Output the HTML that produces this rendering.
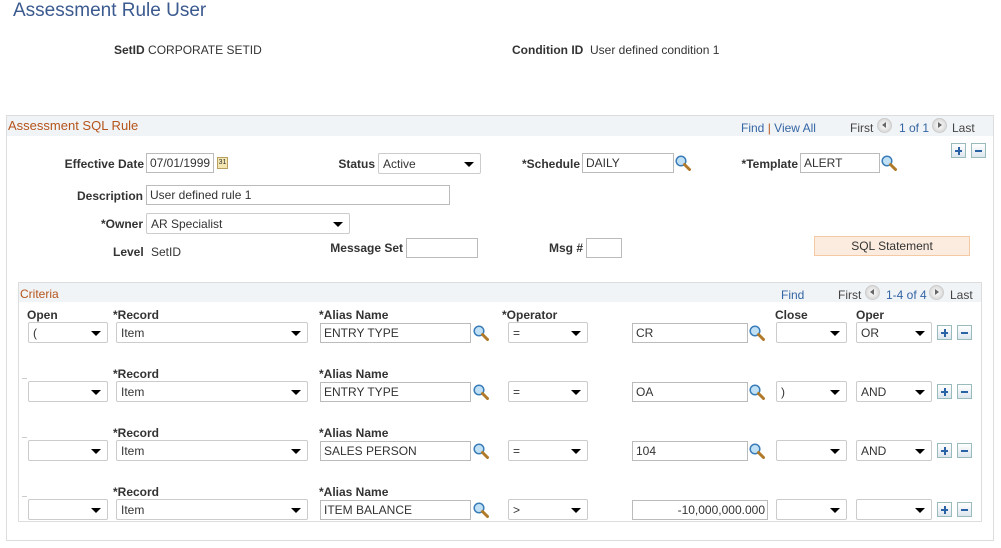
<!DOCTYPE html>
<html><head><meta charset="utf-8"><style>
*{box-sizing:border-box}
body{margin:0;width:1001px;height:548px;background:#fff;font-family:"Liberation Sans",Arial,sans-serif;font-size:12px;color:#333;position:relative;overflow:hidden}
.a{position:absolute;white-space:nowrap;line-height:14px}
.b{font-weight:bold}
.r{text-align:right}
.in{position:absolute;border:1px solid #bbb;background:#fff;height:20px;line-height:18px;padding-left:3px;white-space:nowrap}
.sel{position:absolute;border:1px solid #ccc;border-radius:2px;background:#fff;height:21px;line-height:20px;padding-left:4px;white-space:nowrap}
.sel:after{content:"";position:absolute;right:6px;top:8px;border-left:5px solid transparent;border-right:5px solid transparent;border-top:5px solid #000}
.lens{position:absolute;width:16px;height:16px}
.pm{position:absolute;width:15px;height:15px;border:1px solid #9bb;background:linear-gradient(#fff,#dde6ee);}
.pm:before{content:"";position:absolute;left:3px;top:6px;width:7px;height:2px;background:#2a62a6}
.pm.p:after{content:"";position:absolute;left:6px;top:3px;width:2px;height:8px;background:#2a62a6}
.arr{position:absolute;width:15px;height:15px;border-radius:50%;background:radial-gradient(#fff,#ccc);border:1px solid #ccc}
.arr:after{content:"";position:absolute;top:3px;border-top:3px solid transparent;border-bottom:3px solid transparent}
.arr.l:after{left:4px;border-right:4px solid #666}
.arr.rt:after{left:5px;border-left:4px solid #666}
.lnk{color:#3465a4}
.hd{position:absolute;background:#f1f4f6}
.or{color:#b5541c}
</style></head><body>
<svg width="0" height="0" style="position:absolute"><defs><symbol id="lz" viewBox="0 0 16 16"><circle cx="6" cy="6" r="4.8" fill="#bfe0f5" stroke="#3a7cb8" stroke-width="1.5"/><path d="M9.5 9.5L14.5 14.5" stroke="#b07a2a" stroke-width="3" stroke-linecap="round"/></symbol></defs></svg>

<div class="a" style="left:13px;top:0px;font-size:19px;line-height:22px;color:#3b5a8f">Assessment Rule User</div>
<div class="a" style="left:114px;top:43px"><span class="b">SetID</span> CORPORATE SETID</div>
<div class="a" style="left:512px;top:43px"><span class="b">Condition ID</span>&nbsp; User defined condition 1</div>

<div style="position:absolute;left:6px;top:115px;width:988px;height:426px;border:1px solid #ddd"></div>
<div class="hd" style="left:7px;top:116px;width:986px;height:20px"></div>
<div class="a or" style="left:8px;top:119px;font-size:13px">Assessment SQL Rule</div>
<div class="a" style="left:741px;top:121px"><span class="lnk">Find</span> <span style="color:#b5541c">|</span> <span class="lnk">View All</span></div>
<div class="a" style="left:850px;top:121px;color:#444">First</div>
<div class="arr l" style="left:877px;top:118px"></div>
<div class="a" style="left:899px;top:121px;color:#3465a4">1 of 1</div>
<div class="arr rt" style="left:932px;top:118px"></div>
<div class="a" style="left:952px;top:121px;color:#444">Last</div>
<div class="pm p" style="left:951px;top:143px"></div><div class="pm" style="left:971px;top:143px"></div>

<div class="a b r" style="right:857px;top:157px">Effective Date</div>
<div class="in" style="left:146px;top:153px;width:68px">07/01/1999</div>
<div style="position:absolute;left:217px;top:157px;width:11px;height:12px;background:#f3e6b0;border:1px solid #b9a060;font-size:7px;line-height:10px;text-align:center">31</div>
<div class="a b r" style="right:626px;top:157px">Status</div>
<div class="sel" style="left:378px;top:153px;width:103px">Active</div>
<div class="a b r" style="right:421px;top:157px">*Schedule</div>
<div class="in" style="left:582px;top:153px;width:92px">DAILY</div>
<svg class="lens" style="left:675px;top:155px"><use href="#lz"/></svg>
<div class="a b r" style="right:203px;top:157px">*Template</div>
<div class="in" style="left:800px;top:153px;width:80px">ALERT</div>
<svg class="lens" style="left:881px;top:155px"><use href="#lz"/></svg>

<div class="a b r" style="right:858px;top:189px">Description</div>
<div class="in" style="left:146px;top:185px;width:304px">User defined rule 1</div>
<div class="a b r" style="right:858px;top:217px">*Owner</div>
<div class="sel" style="left:146px;top:213px;width:204px">AR Specialist</div>
<div class="a b" style="left:113px;top:245px">Level</div>
<div class="a" style="left:151px;top:245px">SetID</div>
<div class="a b r" style="right:598px;top:241px">Message Set</div>
<div class="in" style="left:406px;top:238px;width:72px"></div>
<div class="a b r" style="right:418px;top:241px">Msg #</div>
<div class="in" style="left:586px;top:238px;width:36px"></div>
<div style="position:absolute;left:814px;top:236px;width:156px;height:20px;background:#fcecdf;border:1px solid #f4c9a4;text-align:center;line-height:18px">SQL Statement</div>

<div style="position:absolute;left:18px;top:282px;width:964px;height:240px;border:1px solid #ddd"></div>
<div class="hd" style="left:19px;top:283px;width:962px;height:19px"></div>
<div class="a or" style="left:20px;top:287px">Criteria</div>
<div class="a lnk" style="left:781px;top:288px">Find</div>
<div class="a" style="left:838px;top:288px;color:#444">First</div>
<div class="arr l" style="left:865px;top:285px"></div>
<div class="a" style="left:886px;top:288px;color:#3465a4">1-4 of 4</div>
<div class="arr rt" style="left:929px;top:285px"></div>
<div class="a" style="left:950px;top:288px;color:#444">Last</div>

<!-- row 1 -->
<div class="a b" style="left:27px;top:308px">Open</div>
<div class="a b" style="left:113px;top:308px">*Record</div>
<div class="a b" style="left:319px;top:308px">*Alias Name</div>
<div class="a b" style="left:502px;top:308px">*Operator</div>
<div class="a b" style="left:775px;top:308px">Close</div>
<div class="a b" style="left:856px;top:308px">Oper</div>
<div class="sel" style="left:28px;top:322px;width:80px">(</div>
<div class="sel" style="left:116px;top:322px;width:192px">Item</div>
<div class="in" style="left:320px;top:323px;width:151px">ENTRY TYPE</div>
<svg class="lens" style="left:473px;top:325px"><use href="#lz"/></svg>
<div class="sel" style="left:508px;top:322px;width:80px">=</div>
<div class="in" style="left:632px;top:323px;width:116px">CR</div>
<svg class="lens" style="left:749px;top:325px"><use href="#lz"/></svg>
<div class="sel" style="left:776px;top:322px;width:71px"></div>
<div class="sel" style="left:856px;top:322px;width:76px">OR</div>
<div class="pm p" style="left:937px;top:325px"></div><div class="pm" style="left:957px;top:325px"></div>

<!-- row 2 -->
<div style="position:absolute;left:22px;top:378px;width:5px;height:1px;background:#ccc"></div>
<div class="a b" style="left:113px;top:367px">*Record</div>
<div class="a b" style="left:319px;top:367px">*Alias Name</div>
<div class="sel" style="left:28px;top:381px;width:80px"></div>
<div class="sel" style="left:116px;top:381px;width:192px">Item</div>
<div class="in" style="left:320px;top:382px;width:151px">ENTRY TYPE</div>
<svg class="lens" style="left:473px;top:384px"><use href="#lz"/></svg>
<div class="sel" style="left:508px;top:381px;width:80px">=</div>
<div class="in" style="left:632px;top:382px;width:116px">OA</div>
<svg class="lens" style="left:749px;top:384px"><use href="#lz"/></svg>
<div class="sel" style="left:776px;top:381px;width:71px">)</div>
<div class="sel" style="left:856px;top:381px;width:76px">AND</div>
<div class="pm p" style="left:937px;top:384px"></div><div class="pm" style="left:957px;top:384px"></div>

<!-- row 3 -->
<div style="position:absolute;left:22px;top:437px;width:5px;height:1px;background:#ccc"></div>
<div class="a b" style="left:113px;top:426px">*Record</div>
<div class="a b" style="left:319px;top:426px">*Alias Name</div>
<div class="sel" style="left:28px;top:440px;width:80px"></div>
<div class="sel" style="left:116px;top:440px;width:192px">Item</div>
<div class="in" style="left:320px;top:441px;width:151px">SALES PERSON</div>
<svg class="lens" style="left:473px;top:443px"><use href="#lz"/></svg>
<div class="sel" style="left:508px;top:440px;width:80px">=</div>
<div class="in" style="left:632px;top:441px;width:116px">104</div>
<svg class="lens" style="left:749px;top:443px"><use href="#lz"/></svg>
<div class="sel" style="left:776px;top:440px;width:71px"></div>
<div class="sel" style="left:856px;top:440px;width:76px">AND</div>
<div class="pm p" style="left:937px;top:443px"></div><div class="pm" style="left:957px;top:443px"></div>

<!-- row 4 -->
<div style="position:absolute;left:22px;top:496px;width:5px;height:1px;background:#ccc"></div>
<div class="a b" style="left:113px;top:485px">*Record</div>
<div class="a b" style="left:319px;top:485px">*Alias Name</div>
<div class="sel" style="left:28px;top:499px;width:80px"></div>
<div class="sel" style="left:116px;top:499px;width:192px">Item</div>
<div class="in" style="left:320px;top:500px;width:151px">ITEM BALANCE</div>
<svg class="lens" style="left:473px;top:502px"><use href="#lz"/></svg>
<div class="sel" style="left:508px;top:499px;width:80px">&gt;</div>
<div class="in" style="left:632px;top:500px;width:136px;text-align:right;padding-right:2px">-10,000,000.000</div>
<div class="sel" style="left:776px;top:499px;width:71px"></div>
<div class="sel" style="left:856px;top:499px;width:76px"></div>
<div class="pm p" style="left:937px;top:502px"></div><div class="pm" style="left:957px;top:502px"></div>
</body></html>
